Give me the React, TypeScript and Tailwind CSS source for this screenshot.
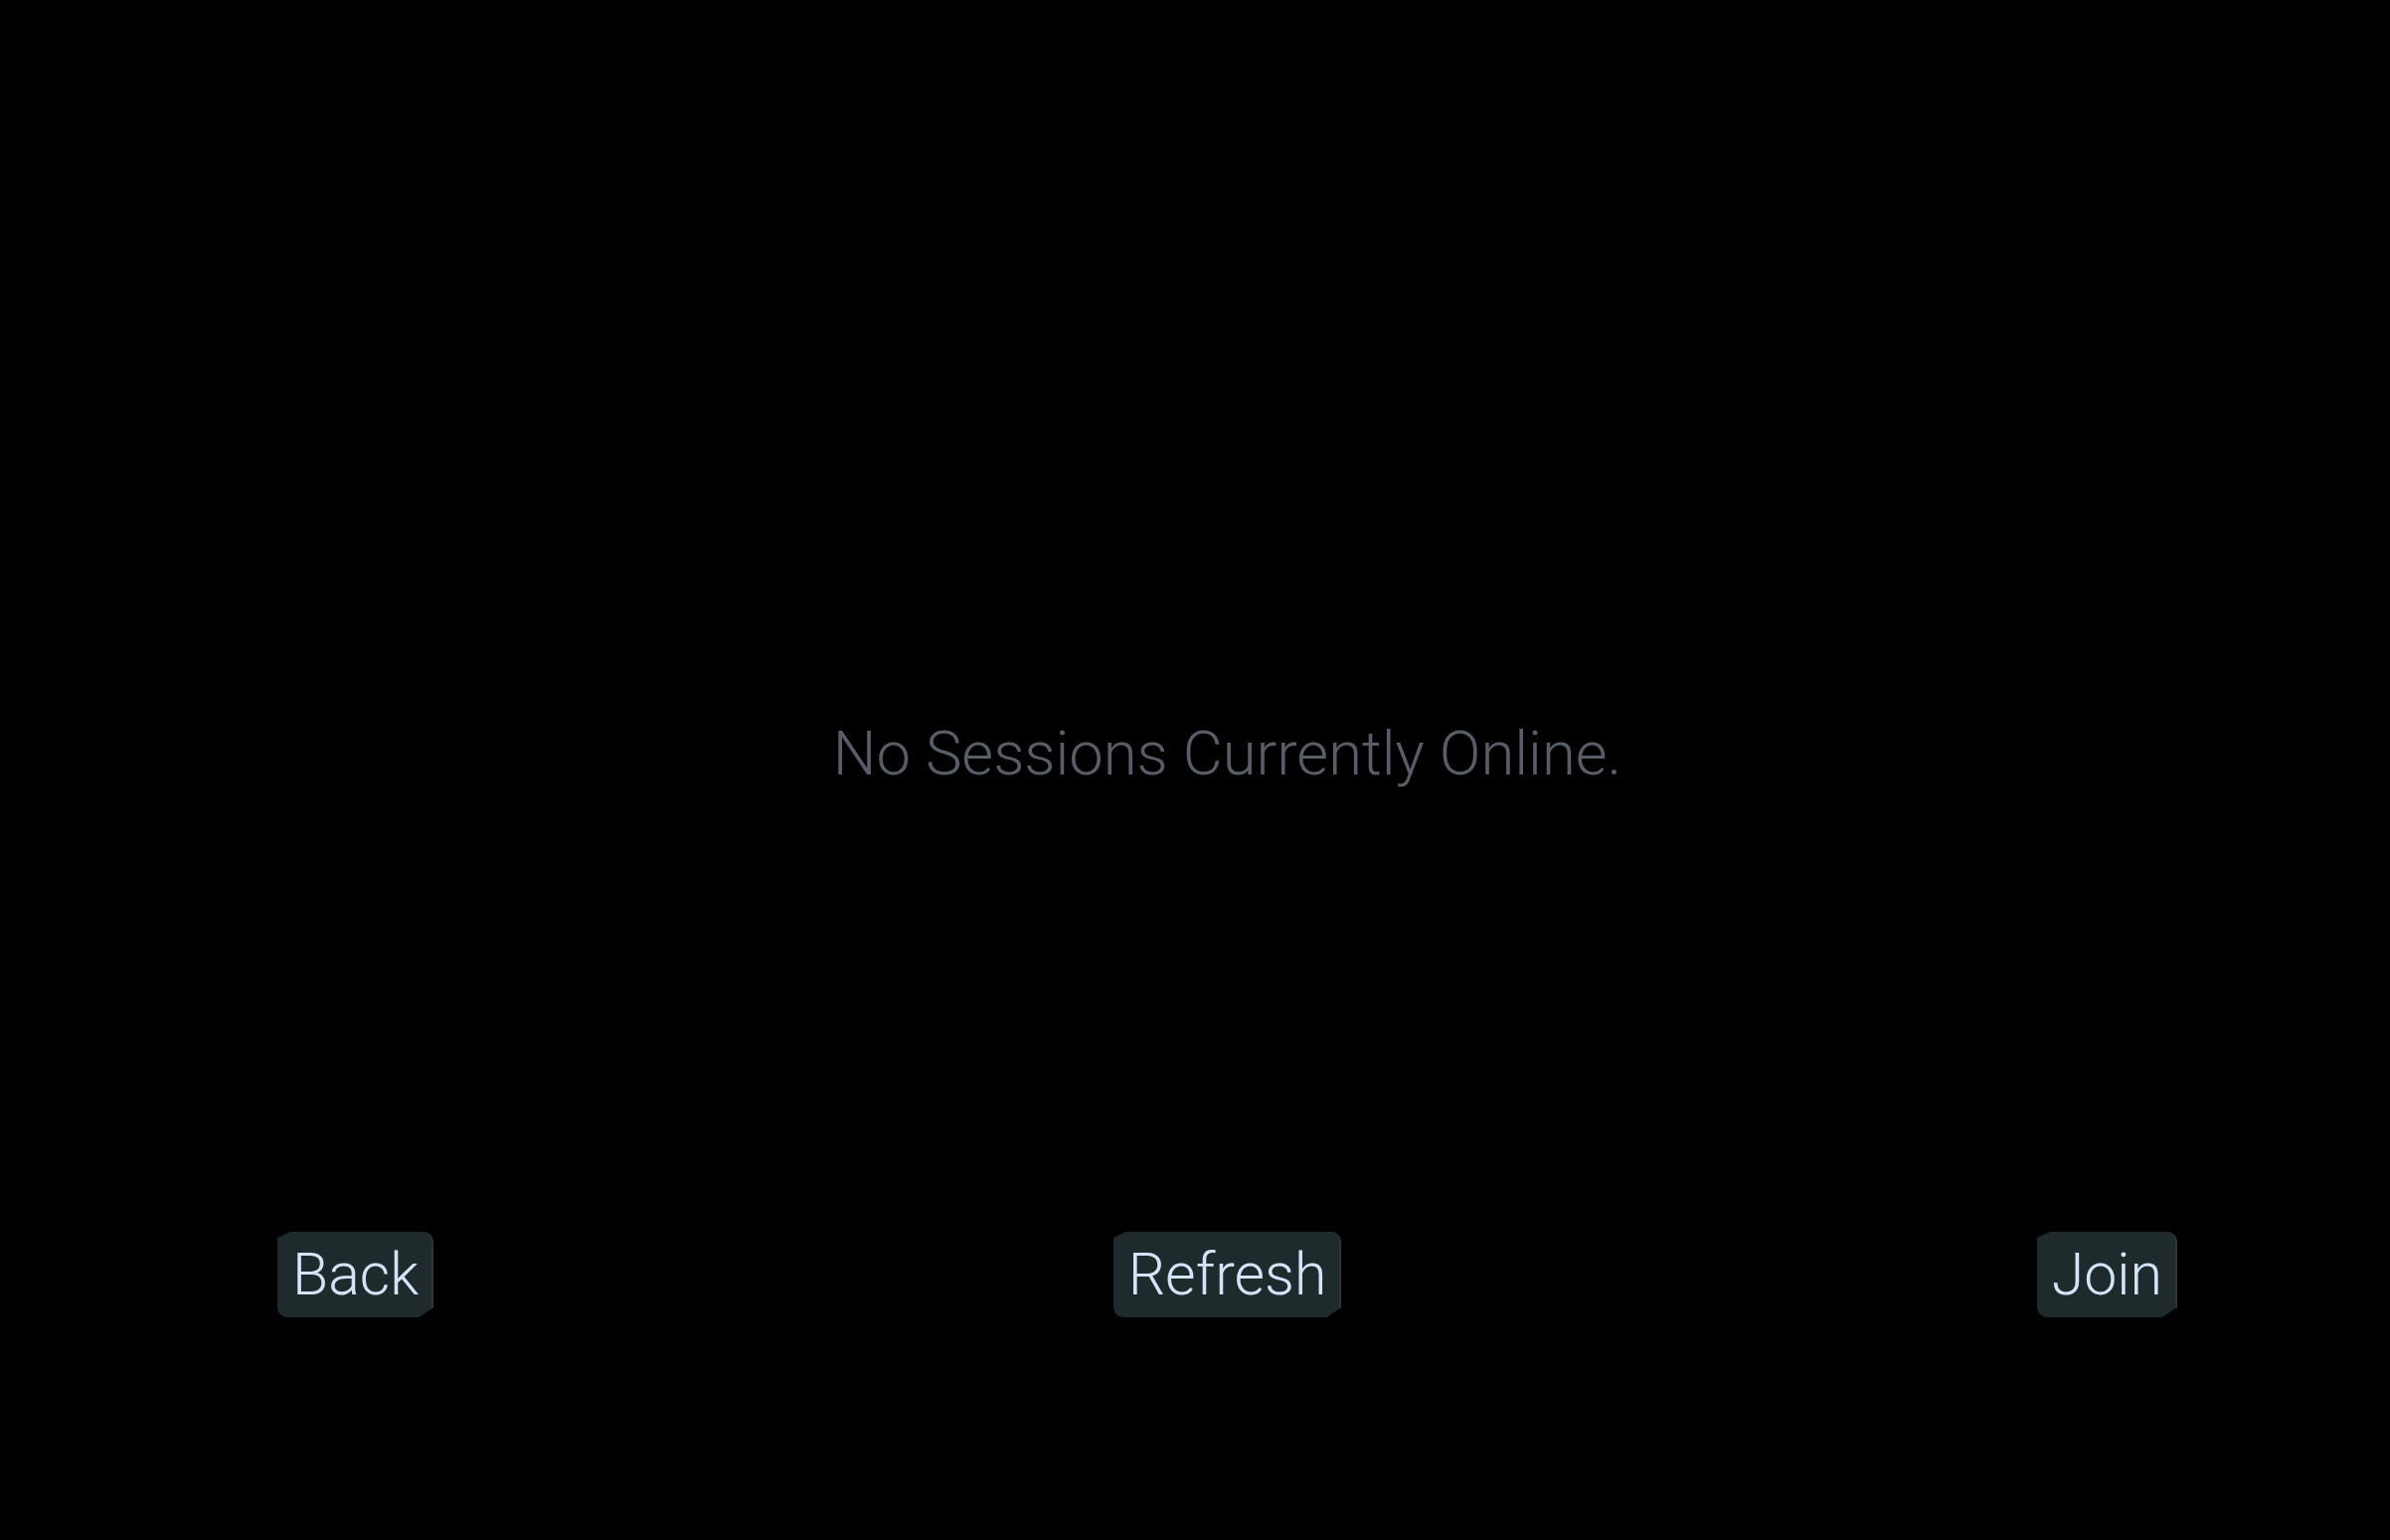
const buttonShape =
  "[clip-path:polygon(13px_0,100%_0,100%_calc(100%-10px),calc(100%-15px)_100%,0_100%,0_6px)]";

function MenuButton({ label, className }: { label: string; className: string }) {
  return (
    <button
      className={`${buttonShape} ${className} rounded-tr-[10px] rounded-bl-[10px] bg-[#1f2a2d] border-r-2 border-[#2a3639] h-[86px] pl-[15px] pr-[13px] pt-[6px] pb-[7px] text-[59px] leading-[73px] font-light text-[#d4e4f6] font-['Roboto',sans-serif]`}
    >
      {label}
    </button>
  );
}

export default function App() {
  return (
    <div className="w-full h-[1549px] bg-black flex flex-col pl-[279px] pr-[214px] font-['Roboto',sans-serif]">
      <p className="mt-[722px] text-center text-[61.5px] leading-[73px] font-light text-[#585e67]">
        No Sessions Currently Online.
      </p>
      <div className="mt-[444px] grid grid-cols-3 items-start">
        <MenuButton label="Back" className="justify-self-start" />
        <MenuButton label="Refresh" className="justify-self-center" />
        <MenuButton label="Join" className="justify-self-end" />
      </div>
    </div>
  );
}
